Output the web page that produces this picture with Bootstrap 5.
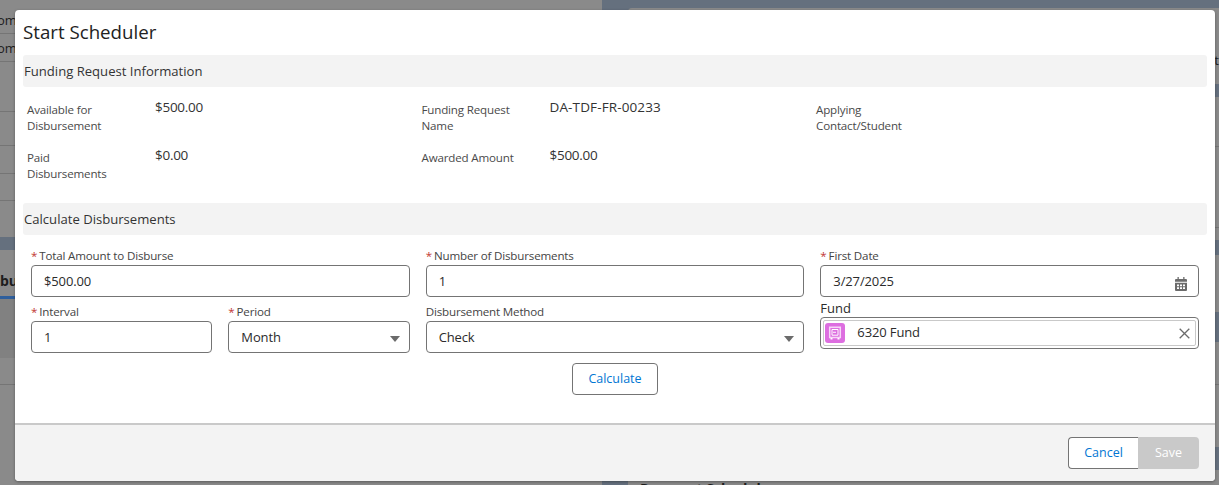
<!DOCTYPE html>
<html lang="en">
<head>
  <meta charset="UTF-8" />
  <title>Start Scheduler</title>
  <link href="https://cdn.jsdelivr.net/npm/bootstrap@5.3.2/dist/css/bootstrap.min.css" rel="stylesheet">
  <style>
    body {
      width: 1219px;
      height: 485px;
      overflow: hidden;
      background: #8a8a8a;
      font-family: "Open Sans", "Noto Sans", sans-serif;
      font-size: 13px;
      color: #2b2b2b;
    }
    /* dimmed page behind the dialog */
    .page-under { height: 485px; color: #1d1d1d; }
    .under-left { width: 602px; flex: none; }
    .under-right { flex: 1; background: #65707e; padding: 8px 0 0 26px; }
    .under-panel { background: #8a8a8a; height: 100%; border-radius: 4px 0 0 0; }
    .under-row { border-bottom: 1px solid #757575; line-height: 20px; white-space: nowrap; text-indent: -3px; }
    .row-a { height: 34px; padding-top: 10px; }
    .row-b { height: 28px; padding-top: 4px; }
    .row-c { height: 50px; }
    .row-d { height: 34px; }
    .row-e { height: 27px; }
    .under-band { height: 13px; background: #65707e; margin-top: 36px; }
    .under-tab { height: 49px; font-weight: 700; font-size: 14px; padding-top: 20px; border-bottom: 3px solid #2f5f9c; width: 20px; overflow: hidden; }
    .under-dark { height: 59px; background: #818181; }
    .under-line { height: 27px; border-bottom: 1px solid #757575; }
    .strip-t { height: 76px; padding-top: 42px; text-align: right; line-height: 20px; }
    .strip-band { background: #65707e; }
    .strip-a { height: 13px; }
    .strip-b { height: 50px; border-bottom: 1px solid #757575; }
    .strip-c { height: 81px; border-bottom: 1px solid #757575; }
    .strip-d { height: 12px; }
    .strip-e { height: 15px; }
    .strip-f { height: 57px; }
    .strip-g { height: 30px; }
    .strip-h { height: 43px; border-bottom: 1px solid #757575; }
    .strip-i { height: 62px; }
    .strip-j { height: 23px; }
    .strip-k { padding: 9px 0 0 12px; font-weight: 700; font-size: 14px; line-height: 20px; }

    .sched-modal {
      position: absolute;
      left: 15px;
      top: 10px;
      width: 1200px;
      height: 471px;
      background: #fff;
      border-radius: 4px;
      box-shadow: 0 1px 3px rgba(0, 0, 0, .35);
    }
    .sched-title { font-size: 18.7px; line-height: 25px; padding: 9px 0 0 8px; height: 45px; color: #222; }
    .sched-body { padding: 0 8px; height: 368px; }
    .sched-section { background: #f3f3f3; height: 32px; line-height: 32px; padding-left: 1px; font-size: 13.1px; border-radius: 3px; color: #333; }
    .info-grid { padding: 10px 4px 0 4px; height: 116px; }
    .info-col { flex: 0 0 394.5px; }
    .info-row { height: 48px; display: flex; }
    .info-label { width: 128px; padding-top: 5px; font-size: 11.6px; letter-spacing: -.17px; line-height: 16px; color: #4a4a4a; }
    .info-value { font-size: 13.5px; line-height: 20px; color: #333; }
    .info-money { letter-spacing: -.28px; }
    .info-name { letter-spacing: .13px; }
    .form-area { padding: 13px 8px 0; }
    .form-col { flex: 1 1 0; min-width: 0; }
    .form-gap { gap: 16px; }
    .sched-label { font-size: 11.6px; letter-spacing: -.17px; line-height: 16px; height: 17px; color: #444; white-space: nowrap; }
    .sched-label i { color: #c23934; font-style: normal; margin-right: 2px; }
    .sched-input {
      height: 32px;
      border: 1px solid #747474;
      border-radius: 4px;
      line-height: 30px;
      padding: 0 12px;
      font-size: 13px;
      letter-spacing: -.13px;
      color: #2b2b2b;
      background: #fff;
      position: relative;
    }
    .form-row-b { margin-top: 7px; }
    .half-col { flex: 1 1 0; min-width: 0; }
    .half-col + .half-col { margin-left: 16px; }
    .sel-arrow { position: absolute; right: 9px; top: 14px; width: 0; height: 0; border-left: 5px solid transparent; border-right: 5px solid transparent; border-top: 6px solid #6b6b6b; }
    .cal-icon { position: absolute; right: 11px; top: 11px; }
    .fund-label { font-size: 13px; color: #2b2b2b; height: 17px; line-height: 16px; margin-top: -4px; }
    .fund-box { padding: 2px; }
    .fund-inner { border: 1px solid #c9c9c9; border-radius: 2px; height: 26px; display: flex; align-items: center; padding-left: 1px; line-height: 24px; position: relative; }
    .fund-icon { width: 20px; height: 20px; border-radius: 3px; background: #dd6ee0; display: flex; align-items: center; justify-content: center; margin-right: 12px; }
    .fund-name { padding-bottom: 2px; }
    .fund-x { position: absolute; right: 5px; top: 7px; }
    .btn-calc, .btn-calc:hover {
      display: block;
      margin: 10px auto 0;
      width: 86px;
      height: 32px;
      padding: 0;
      background: #fff;
      border: 1px solid #747474;
      border-radius: 4px;
      color: #0176d3;
      font-size: 12.5px;
      line-height: 30px;
    }
    .sched-footer { height: 58px; background: #f3f3f3; border-top: 2px solid #c9c9c9; border-radius: 0 0 4px 4px; padding: 12px 16px 0 0; }
    .btn-cancel, .btn-cancel:hover { width: 70px; height: 32px; padding: 0; background: #fff; border: 1px solid #747474; border-right: 0; border-radius: 4px 0 0 4px; color: #0176d3; font-size: 12.5px; line-height: 30px; }
    .btn-save, .btn-save:disabled { width: 61px; height: 32px; padding: 0; background: #c9c9c9; border: 0; border-radius: 0 4px 4px 0; color: #fff; font-size: 12.5px; line-height: 32px; opacity: 1; }
  </style>
</head>
<body>
  <div class="page-under d-flex">
    <div class="under-left">
      <div class="under-row row-a">om</div>
      <div class="under-row row-b">om</div>
      <div class="under-row row-c"></div>
      <div class="under-row row-d"></div>
      <div class="under-row row-b"></div>
      <div class="under-row row-e"></div>
      <div class="under-band"></div>
      <div class="under-tab">bu</div>
      <div class="under-dark"></div>
      <div class="under-line"></div>
    </div>
    <div class="under-right">
      <div class="under-panel">
        <div class="strip-t">t</div>
        <div class="strip-band strip-a"></div>
        <div class="strip-b"></div>
        <div class="strip-c"></div>
        <div class="strip-d"></div>
        <div class="strip-band strip-e"></div>
        <div class="strip-f"></div>
        <div class="strip-band strip-g"></div>
        <div class="strip-h"></div>
        <div class="strip-i"></div>
        <div class="strip-band strip-j"></div>
        <div class="strip-k">Payment Schedule</div>
      </div>
    </div>
  </div>

  <div class="sched-modal d-flex flex-column">
    <div class="sched-title">Start Scheduler</div>
    <div class="sched-body">
      <div class="sched-section">Funding Request Information</div>
      <div class="info-grid d-flex">
        <div class="info-col">
          <div class="info-row"><div class="info-label">Available for<br>Disbursement</div><div class="info-value info-money">$500.00</div></div>
          <div class="info-row"><div class="info-label">Paid<br>Disbursements</div><div class="info-value info-money">$0.00</div></div>
        </div>
        <div class="info-col">
          <div class="info-row"><div class="info-label">Funding Request<br>Name</div><div class="info-value info-name">DA-TDF-FR-00233</div></div>
          <div class="info-row"><div class="info-label">Awarded Amount</div><div class="info-value info-money">$500.00</div></div>
        </div>
        <div class="info-col">
          <div class="info-row"><div class="info-label">Applying<br>Contact/Student</div><div class="info-value"></div></div>
        </div>
      </div>
      <div class="sched-section">Calculate Disbursements</div>
      <div class="form-area">
        <div class="d-flex form-gap">
          <div class="form-col">
            <div class="sched-label"><i>*</i>Total Amount to Disburse</div>
            <div class="sched-input">$500.00</div>
          </div>
          <div class="form-col">
            <div class="sched-label"><i>*</i>Number of Disbursements</div>
            <div class="sched-input">1</div>
          </div>
          <div class="form-col">
            <div class="sched-label"><i>*</i>First Date</div>
            <div class="sched-input">3/27/2025
              <svg class="cal-icon" width="12" height="14" viewBox="0 0 12 14"><path fill="#6b6b6b" d="M2.500 0h1.300v2h4.400V0h1.300v2H11a1 1 0 0 1 1 1v1.800H0V3a1 1 0 0 1 1-1h1.500zM0 5.800h12V13a1 1 0 0 1-1 1H1a1 1 0 0 1-1-1z"/><path fill="#fff" d="M2 7.500h2v1.700H2zM5 7.500h2v1.700H5zM8 7.500h2v1.700H8zM2 10.300h2V12H2zM5 10.300h2V12H5zM8 10.300h2V12H8z"/></svg>
            </div>
          </div>
        </div>
        <div class="d-flex form-gap form-row-b">
          <div class="form-col d-flex">
            <div class="half-col">
              <div class="sched-label"><i>*</i>Interval</div>
              <div class="sched-input">1</div>
            </div>
            <div class="half-col">
              <div class="sched-label"><i>*</i>Period</div>
              <div class="sched-input">Month<span class="sel-arrow"></span></div>
            </div>
          </div>
          <div class="form-col">
            <div class="sched-label">Disbursement Method</div>
            <div class="sched-input">Check<span class="sel-arrow"></span></div>
          </div>
          <div class="form-col">
            <div class="fund-label">Fund</div>
            <div class="sched-input fund-box">
              <div class="fund-inner">
                <span class="fund-icon">
                  <svg width="14" height="14" viewBox="0 0 14 14"><path fill="none" stroke="#f8d6f8" stroke-width="1.500" d="M1.700 1.200h10.600v10.300H1.700z"/><path fill="none" stroke="#fff" stroke-width="1" d="M4 3.500h6v5.700H4z"/><path fill="#fff" d="M5 5.800h3v1H5zM2.500 12h2v1.500h-2zM9.500 12h2v1.500h-2z"/></svg>
                </span>
                <span class="fund-name">6320 Fund</span>
                <svg class="fund-x" width="11" height="11" viewBox="0 0 11 11"><path stroke="#6b6b6b" stroke-width="1.300" fill="none" d="M.7.700l9.600 9.600M10.300.7L.7 10.300"/></svg>
              </div>
            </div>
          </div>
        </div>
        <button type="button" class="btn btn-calc">Calculate</button>
      </div>
    </div>
    <div class="sched-footer d-flex justify-content-end">
      <button type="button" class="btn btn-cancel">Cancel</button>
      <button type="button" class="btn btn-save" disabled>Save</button>
    </div>
  </div>
  <script src="https://cdn.jsdelivr.net/npm/bootstrap@5.3.2/dist/js/bootstrap.bundle.min.js"></script>
</body>
</html>
